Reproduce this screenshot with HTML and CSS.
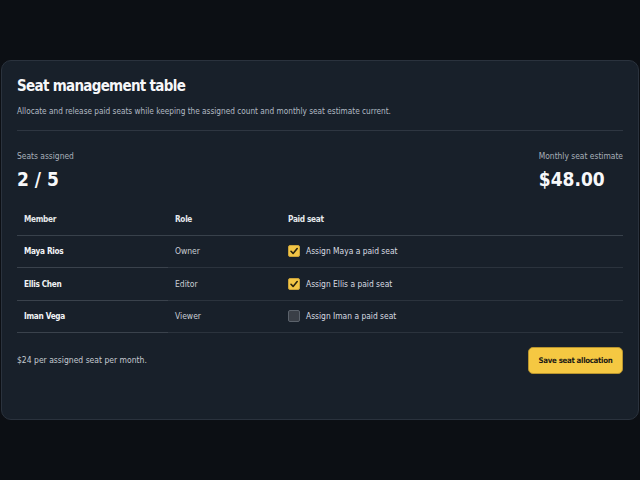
FILE: index.html
```html
<!DOCTYPE html>
<html lang="en">
<head>
<meta charset="utf-8">
<title>Seat management table</title>
<link rel="stylesheet" href="styles.css">
</head>
<body>
<main class="card">
  <header class="card-head">
    <h1 class="title">Seat management table</h1>
    <p class="subtitle">Allocate and release paid seats while keeping the assigned count and monthly seat estimate current.</p>
  </header>
  <section class="stats">
    <div class="stat">
      <div class="stat-label">Seats assigned</div>
      <div class="stat-value">2 / 5</div>
    </div>
    <div class="stat">
      <div class="stat-label">Monthly seat estimate</div>
      <div class="stat-value">$48.00</div>
    </div>
  </section>
  <table class="seats">
    <colgroup>
      <col class="col-member">
      <col class="col-role">
      <col>
    </colgroup>
    <thead>
      <tr><th>Member</th><th>Role</th><th>Paid seat</th></tr>
    </thead>
    <tbody>
      <tr>
        <th class="name">Maya Rios</th>
        <td>Owner</td>
        <td><label class="check"><span class="box on"><svg viewBox="0 0 12 12" width="12" height="12"><path d="M3 6.3 L5.1 8.4 L9.2 3.6" fill="none" stroke="#2a2410" stroke-width="1.6" stroke-linecap="round" stroke-linejoin="round"/></svg></span>Assign Maya a paid seat</label></td>
      </tr>
      <tr class="tall">
        <th class="name">Ellis Chen</th>
        <td>Editor</td>
        <td><label class="check"><span class="box on"><svg viewBox="0 0 12 12" width="12" height="12"><path d="M3 6.3 L5.1 8.4 L9.2 3.6" fill="none" stroke="#2a2410" stroke-width="1.6" stroke-linecap="round" stroke-linejoin="round"/></svg></span>Assign Ellis a paid seat</label></td>
      </tr>
      <tr>
        <th class="name">Iman Vega</th>
        <td>Viewer</td>
        <td><label class="check"><span class="box off"></span>Assign Iman a paid seat</label></td>
      </tr>
    </tbody>
  </table>
  <footer class="card-foot">
    <p class="rate">$24 per assigned seat per month.</p>
    <button class="save" type="button">Save seat allocation</button>
  </footer>
</main>
</body>
</html>
```
FILE: styles.css
```css
* { box-sizing: border-box; }
html, body { margin: 0; padding: 0; }
body {
  background: #0c0f14;
  min-height: 100vh;
  display: flex;
  align-items: center;
  justify-content: center;
  font-family: "DejaVu Sans", sans-serif;
  font-stretch: condensed;
  color: #e9ecef;
}
.card {
  width: 638px;
  height: 360px;
  background: #18202a;
  border: 1px solid #2a323d;
  border-radius: 10px;
  padding: 15px 15px 0 15px;
}
.card-head {
  border-bottom: 1px solid #2e3641;
  padding-bottom: 12px;
}
.title {
  margin: 0;
  font-size: 15px;
  line-height: 20px;
  letter-spacing: -0.7px;
  font-weight: bold;
  color: #f6f7f9;
}
.subtitle {
  margin: 8px 0 0 0;
  font-size: 8.2px;
  line-height: 14px;
  color: #b2bac4;
}
.stats {
  display: flex;
  justify-content: space-between;
  padding-top: 19px;
}
.stat-label {
  font-size: 8.4px;
  line-height: 13px;
  color: #a8b0ba;
}
.stat-value {
  margin-top: 5px;
  font-size: 19px;
  line-height: 23px;
  font-weight: bold;
  color: #f7f8fa;
}
.seats {
  width: 100%;
  border-collapse: collapse;
  margin-top: 12px;
  font-size: 8.5px;
}
.col-member { width: 151px; }
.col-role { width: 113px; }
.seats th, .seats td {
  text-align: left;
  padding: 0 7px;
  height: 32px;
  border-bottom: 1px solid #2b333d;
}
.seats tr.tall th, .seats tr.tall td { height: 33px; }
.seats th {
  font-size: 8.2px;
  letter-spacing: -0.3px;
}
.seats thead th {
  font-weight: bold;
  color: #e6e9ec;
  border-bottom-color: #38414b;
}
.seats th.name {
  font-weight: bold;
  color: #f2f4f6;
  border-bottom-color: #3a424c;
}
.seats td { color: #c9ced4; }
.check {
  display: flex;
  align-items: center;
  gap: 6px;
  font-size: 8.4px;
  color: #d9dde2;
}
.box {
  width: 12px;
  height: 12px;
  border-radius: 2px;
  display: inline-flex;
}
.box.on {
  background: #f2c546;
  border: 1px solid #c9a23a;
}
.box.on svg { margin: -1px; }
.box.off {
  background: #3a3f47;
  border: 1px solid #5b626b;
}
.card-foot {
  display: flex;
  justify-content: space-between;
  align-items: center;
  margin-top: 14px;
}
.rate {
  margin: 0;
  font-size: 8.5px;
  color: #c4cad1;
}
.save {
  height: 27px;
  width: 95px;
  background: #f5c842;
  border: 1px solid #b8942e;
  border-radius: 5px;
  color: #1c1a14;
  font-family: inherit;
  font-stretch: condensed;
  font-size: 7.8px;
  letter-spacing: -0.3px;
  font-weight: bold;
  padding: 0;
}
```
